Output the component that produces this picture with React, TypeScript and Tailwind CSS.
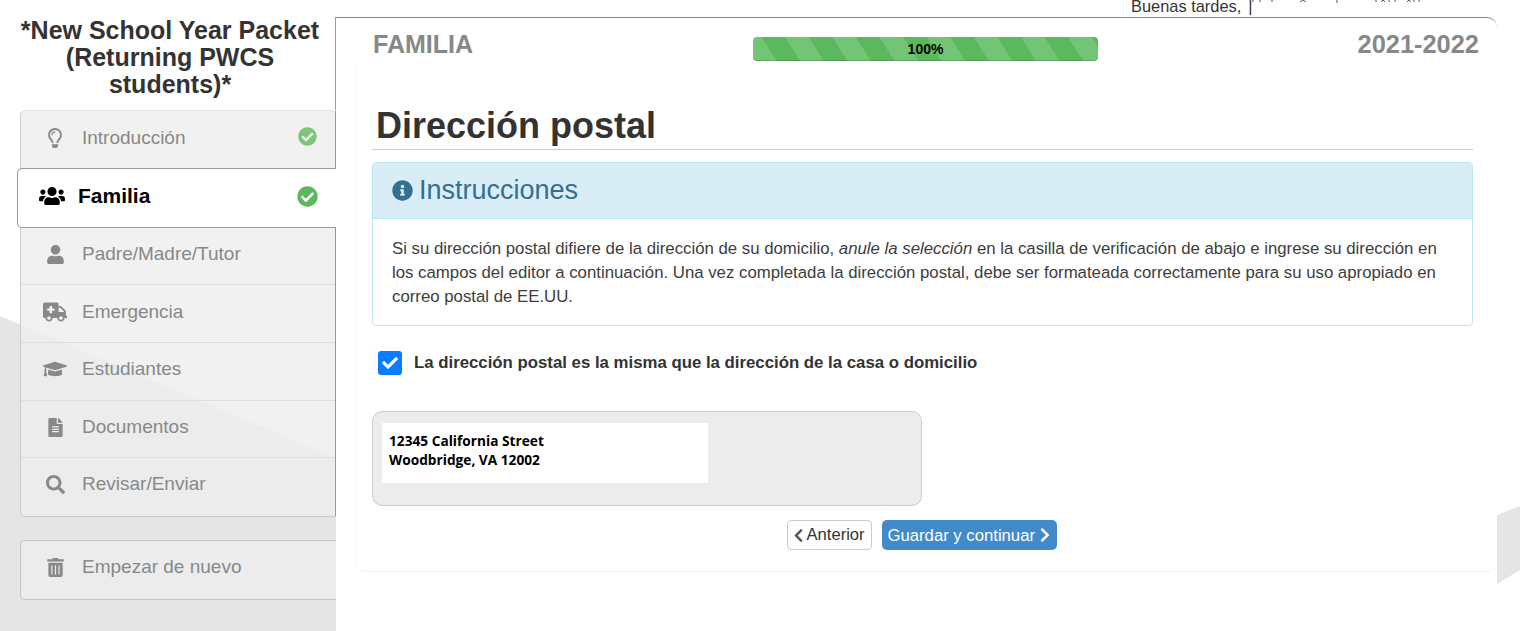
import {
  FaAmbulance,
  FaCheck,
  FaCheckCircle,
  FaChevronLeft,
  FaChevronRight,
  FaFileAlt,
  FaGraduationCap,
  FaInfoCircle,
  FaRegLightbulb,
  FaSearch,
  FaTrashAlt,
  FaUser,
  FaUsers,
} from 'react-icons/fa';
import type { IconType } from 'react-icons';

interface Step {
  label: string;
  icon: IconType;
  iconClass: string;
  rowClass: string;
}

const stepsAfter: Step[] = [
  { label: 'Padre/Madre/Tutor', icon: FaUser, iconClass: 'text-[19px]', rowClass: 'h-[57px] pb-[3px]' },
  { label: 'Emergencia', icon: FaAmbulance, iconClass: 'text-[24px]', rowClass: 'h-[58px] pb-[3px]' },
  { label: 'Estudiantes', icon: FaGraduationCap, iconClass: 'text-[24px]', rowClass: 'h-[58px] pb-[5px]' },
  { label: 'Documentos', icon: FaFileAlt, iconClass: 'text-[19px]', rowClass: 'h-[57px] pb-[3px]' },
  { label: 'Revisar/Enviar', icon: FaSearch, iconClass: 'text-[19px]', rowClass: 'h-[58px] pb-[5px]' },
];

function StepRow({ label, icon: Icon, iconClass, rowClass }: Step) {
  return (
    <div className={`flex items-center border-b border-[#dedede] last:border-b-0 text-[#888] ${rowClass}`}>
      <span className="flex w-[61px] justify-center pl-[7px]">
        <Icon className={iconClass} />
      </span>
      <span className="text-[19px]">{label}</span>
    </div>
  );
}

function Sidebar() {
  return (
    <aside className="z-10 flex w-[336px] shrink-0 flex-col">
      <h2 className="w-[320px] pl-[20px] pt-[17px] pb-[12px] text-center text-[25px] leading-[27px] font-bold text-[#333]">
        *New School Year Packet (Returning PWCS students)*
      </h2>

      <div className="relative ml-[20px] rounded-l-[5px] border border-r-0 border-[#ccc] border-t-[#e4e4e4] bg-[#eeeeee]/80 after:absolute after:right-0 after:top-0 after:bottom-0 after:w-px after:bg-[#999]">
        <div className="flex h-[57px] items-center pb-[3px] text-[#888]">
          <span className="flex w-[61px] justify-center pl-[7px]">
            <FaRegLightbulb className="text-[20px]" />
          </span>
          <span className="text-[19px]">Introducción</span>
          <FaCheckCircle className="ml-auto mr-[19px] -mt-[4px] text-[19px] text-[#7cc67c]" />
        </div>

        {/* active step sticks out to the left */}
        <div className="relative z-10 -ml-[4px] flex h-[60px] items-center rounded-l-[5px] border border-r-0 border-[#999] bg-white pb-[4px] text-black">
          <span className="flex w-[60px] justify-center pl-[8px]">
            <FaUsers className="text-[26px]" />
          </span>
          <span className="text-[21px] font-bold">Familia</span>
          <FaCheckCircle className="ml-auto mr-[18px] text-[21px] text-[#5cb85c]" />
        </div>

        {stepsAfter.map((step) => (
          <StepRow key={step.label} {...step} />
        ))}
      </div>

      <div className="ml-[20px] mt-[23px] flex h-[60px] items-center rounded-l-[5px] border border-r-0 border-[#c4c4c4] bg-[#eeeeee]/80 pb-[6px] text-[#888]">
        <span className="flex w-[61px] justify-center pl-[7px]">
          <FaTrashAlt className="text-[19px]" />
        </span>
        <span className="text-[19px]">Empezar de nuevo</span>
      </div>
    </aside>
  );
}

function ProgressBar() {
  return (
    <div className="relative flex h-[24px] w-[345px] items-center justify-center overflow-hidden rounded-[4px] bg-[#5cb85c] bg-[repeating-linear-gradient(58deg,#74c476_0,#74c476_20px,#5cb85c_20px,#5cb85c_40px)] shadow-[inset_0_-1px_0_rgba(0,0,0,0.15)]">
      <span className="text-[14px] font-bold text-black">100%</span>
    </div>
  );
}

function Main() {
  return (
    <main className="z-10 mt-[17px] flex h-[555px] w-[1161px] flex-col rounded-tr-[10px] border-t border-[#888] bg-white">
      <div className="flex items-start pl-[37px] pr-[18px] pt-[12px]">
        <h3 className="-mt-px w-[380px] text-[25px] leading-[30px] font-bold text-[#888]">FAMILIA</h3>
        <div className="pt-[7px]">
          <ProgressBar />
        </div>
        <h3 className="-mt-px flex-1 text-right text-[25.4px] leading-[30px] font-bold text-[#888]">2021-2022</h3>
      </div>

      <div className="ml-[19px] flex-1 rounded-b-[10px] border-b border-l border-[#f2f2f2] border-l-[#fbfbfb] pl-[16px] pr-[24px]">
        <h1 className="mt-[44px] border-b border-[#ccc] pb-[2px] pl-[4px] text-[36px] leading-[42px] font-bold text-[#333]">
          Dirección postal
        </h1>

        <section className="mt-[12px] overflow-hidden rounded-[4px] border border-[#bce8f1]">
          <div className="flex h-[56px] items-center gap-[6px] border-b border-[#bce8f1] bg-[#d9edf7] pl-[19px] text-[#31708f]">
            <FaInfoCircle className="text-[21px]" />
            <span className="text-[27px]">Instrucciones</span>
          </div>
          <p className="px-[19px] pt-[18px] pb-[16px] text-[16.8px] leading-[24px] text-[#3d3d3d]">
            Si su dirección postal difiere de la dirección de su domicilio,{' '}
            <em>anule la selección</em> en la casilla de verificación de abajo e ingrese su dirección en
            los campos del editor a continuación. Una vez completada la dirección postal, debe ser formateada
            correctamente para su uso apropiado en correo postal de EE.UU.
          </p>
        </section>

        <label className="mt-[24px] flex items-center gap-[12px] pl-[6px]">
          <span className="flex h-[24px] w-[24px] items-center justify-center rounded-[3px] bg-[#0a7cff] text-white">
            <FaCheck className="text-[16px]" />
          </span>
          <span className="text-[16.8px] font-bold text-[#333]">
            La dirección postal es la misma que la dirección de la casa o domicilio
          </span>
        </label>

        <div className="mt-[36px] h-[95px] w-[550px] rounded-[10px] border border-[#ccc] bg-[#ececec] pl-[9px] pt-[11px]">
          <div className="h-[60px] w-[326px] bg-white pl-[7px] pt-[8px] font-['Open_Sans',sans-serif] text-[13.7px] leading-[19px] font-bold text-black">
            12345 California Street
            <br />
            Woodbridge, VA 12002
          </div>
        </div>

        <div className="mt-[14px] flex justify-center gap-[10px] pr-[2px]">
          <button className="flex h-[30px] w-[85px] items-center gap-[1px] rounded-[4px] border border-[#ccc] bg-white pl-[3px] text-[16.6px] text-[#333]">
            <FaChevronLeft className="text-[15px] text-[#555]" />
            Anterior
          </button>
          <button className="flex h-[30px] w-[175px] items-center gap-[2px] rounded-[5px] bg-[#428bca] pl-[6px] text-[16.7px] text-white">
            Guardar y continuar
            <FaChevronRight className="text-[16px]" />
          </button>
        </div>
      </div>
    </main>
  );
}

export default function App() {
  return (
    <div className="relative flex h-[631px] w-[1520px] overflow-hidden bg-white font-['Liberation_Sans',Arial,sans-serif]">
      {/* angled grey backdrop */}
      <div className="absolute inset-0 bg-[#e5e5e5] [clip-path:polygon(0_316px,336px_458px,336px_631px,0_631px)]" />
      <div className="absolute inset-0 bg-[#e5e5e5] [clip-path:polygon(1497px_515px,1520px_506px,1520px_570px,1497px_584px)]" />

      {/* panel edge above the step list */}
      <div className="absolute left-[335px] top-[17px] z-20 h-[93px] w-px bg-[#999]" />

      <div className="absolute left-[1131px] top-[-3px] z-20 flex text-[16.4px] leading-[18px] text-[#333]">
        Buenas tardes,
        <span className="ml-[7px]">|</span>
      </div>

      {/* the name is cut off at the top edge, only its descending ticks are left */}
      <svg className="absolute left-[1249px] top-0 z-20" width="175" height="4" stroke="#555" strokeWidth="1">
        <path d="M4 0v2M11 0v2M23 0v2M51 2l3-2 3 2M88 0v3M127 0v2M132 2l2-2 2 2M140 0v2M146 0v2M158 2l2-2 2 2M165 0v2M170 0v2" fill="none" />
      </svg>

      <Sidebar />
      <Main />
    </div>
  );
}
